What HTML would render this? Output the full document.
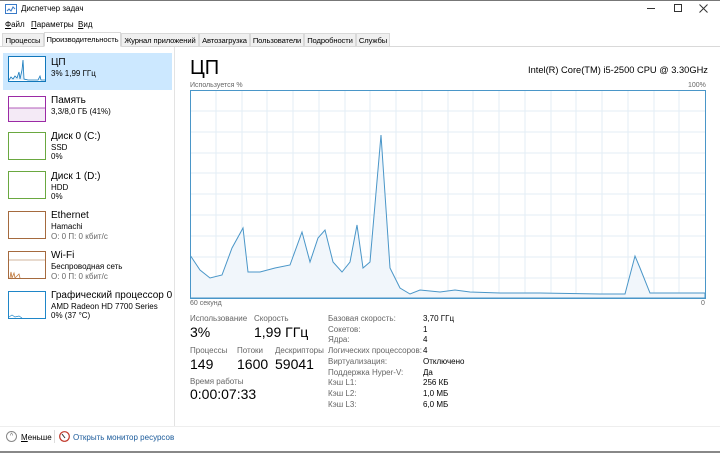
<!DOCTYPE html>
<html><head><meta charset="utf-8"><style>
*{margin:0;padding:0;box-sizing:border-box}
body{width:720px;height:453px;overflow:hidden;background:#fff;font-family:"Liberation Sans","DejaVu Sans",sans-serif;color:#000;position:relative}
.a{position:absolute;white-space:nowrap}
.s{font-size:8px}
.t{font-size:10px}
.g{color:#666}
.tab{position:absolute;top:33px;height:14px;font-size:7.6px;padding:2px 1px;border:1px solid #d9d9d9;background:#f0f0f0;white-space:nowrap;overflow:hidden;text-align:center;letter-spacing:-0.1px}
</style></head><body>
<div class="a" style="left:0;top:0;width:720px;height:1px;background:#777"></div>
<svg class="a" style="left:5px;top:4px" width="12" height="11"><rect x="0.5" y="0.5" width="11" height="9" fill="#fff" stroke="#3a7bc8"/><polyline points="2,7 4,5 6,7 8,3 10,5" fill="none" stroke="#3a7bc8"/></svg>
<div class="a s" style="left:21px;top:4px">Диспетчер задач</div>
<div class="a" style="left:647px;top:8px;width:8px;height:1px;background:#333"></div>
<div class="a" style="left:674px;top:4px;width:8px;height:8px;border:1px solid #333"></div>
<svg class="a" style="left:699px;top:4px" width="9" height="9"><path d="M0.5 0.5L8.5 8.5M8.5 0.5L0.5 8.5" stroke="#333"/></svg>
<div class="a s" style="left:5px;top:20px"><u>Ф</u>айл</div>
<div class="a s" style="left:31px;top:20px"><u>П</u>араметры</div>
<div class="a s" style="left:78px;top:20px"><u>В</u>ид</div>
<div class="a" style="left:0;top:46px;width:720px;height:1px;background:#d9d9d9"></div>
<div class="tab" style="left:2px;width:42px">Процессы</div>
<div class="tab" style="left:44px;top:32px;height:15px;width:77px;background:#fff;border-bottom-color:#fff">Производительность</div>
<div class="tab" style="left:121px;width:78px">Журнал приложений</div>
<div class="tab" style="left:199px;width:51px">Автозагрузка</div>
<div class="tab" style="left:250px;width:54px">Пользователи</div>
<div class="tab" style="left:304px;width:52px">Подробности</div>
<div class="tab" style="left:356px;width:34px">Службы</div>

<div class="a" style="left:174px;top:47px;width:1px;height:380px;background:#e3e3e3"></div>
<div class="a" style="left:3px;top:53px;width:169px;height:37px;background:#cce8ff"></div>

<svg class="a" style="left:0;top:50px" width="60" height="280">
<rect x="8.5" y="6.5" width="37" height="25" fill="#fff" stroke="#1177bb"/>
<polyline points="9,30 11,27 13,29 15,26 17,28 19,22 20,29 22,20 23,10 24,29 28,30 38,30 40,26 41,30 45,30" fill="#e6f1fa" stroke="#1177bb" stroke-width="0.8"/>
<rect x="8.5" y="46.5" width="37" height="25" fill="#fff" stroke="#9b2aa5"/>
<rect x="9" y="58" width="36" height="13" fill="#f4eaf6"/><line x1="9" y1="58" x2="45" y2="58" stroke="#9b2aa5" stroke-width="0.8"/>
<rect x="8.5" y="82.5" width="37" height="27" fill="#fff" stroke="#6aa840"/>
<rect x="8.5" y="121.5" width="37" height="27" fill="#fff" stroke="#6aa840"/>
<rect x="8.5" y="161.5" width="37" height="27" fill="#fff" stroke="#a56a3e"/>
<rect x="8.5" y="201.5" width="37" height="27" fill="#fff" stroke="#a56a3e"/>
<line x1="9" y1="210" x2="45" y2="210" stroke="#a56a3e" stroke-width="0.6"/>
<polyline points="10,228 11,222 12,228 14,223 15,228 19,224 20,228" fill="none" stroke="#c07a3e" stroke-width="0.8"/>
<rect x="8.5" y="241.5" width="37" height="27" fill="#fff" stroke="#1f86c8"/>
<polyline points="9,267 12,265 15,267 19,266 22,268" fill="none" stroke="#1f86c8" stroke-width="0.7"/>
</svg>

<div class="a t" style="left:51px;top:57px">ЦП</div>
<div class="a s" style="left:51px;top:69px">3% 1,99 ГГц</div>
<div class="a t" style="left:51px;top:95px">Память</div>
<div class="a s" style="left:51px;top:107px">3,3/8,0 ГБ (41%)</div>
<div class="a t" style="left:51px;top:131px">Диск 0 (C:)</div>
<div class="a s" style="left:51px;top:143px">SSD</div>
<div class="a s" style="left:51px;top:152px">0%</div>
<div class="a t" style="left:51px;top:171px">Диск 1 (D:)</div>
<div class="a s" style="left:51px;top:183px">HDD</div>
<div class="a s" style="left:51px;top:192px">0%</div>
<div class="a t" style="left:51px;top:210px">Ethernet</div>
<div class="a s" style="left:51px;top:222px">Hamachi</div>
<div class="a s g" style="left:51px;top:232px">О: 0 П: 0 кбит/с</div>
<div class="a t" style="left:51px;top:250px">Wi-Fi</div>
<div class="a s" style="left:51px;top:262px">Беспроводная сеть</div>
<div class="a s g" style="left:51px;top:272px">О: 0 П: 0 кбит/с</div>
<div class="a t" style="left:51px;top:290px">Графический процессор 0</div>
<div class="a s" style="left:51px;top:302px">AMD Radeon HD 7700 Series</div>
<div class="a s" style="left:51px;top:311px">0% (37 °C)</div>

<div class="a" style="left:190px;top:57px;font-size:20px">ЦП</div>
<div class="a" style="left:528px;top:65px;font-size:9.3px">Intel(R) Core(TM) i5-2500 CPU @ 3.30GHz</div>
<div class="a g" style="left:190px;top:82px;font-size:7px">Используется %</div>
<div class="a g" style="left:688px;top:82px;font-size:7px">100%</div>

<svg class="a" style="left:190px;top:90px" width="516" height="209">
<g stroke="#e3eef5" stroke-width="1">
<line x1="26" y1="0" x2="26" y2="208"/><line x1="52" y1="0" x2="52" y2="208"/><line x1="77" y1="0" x2="77" y2="208"/><line x1="103" y1="0" x2="103" y2="208"/><line x1="129" y1="0" x2="129" y2="208"/><line x1="155" y1="0" x2="155" y2="208"/><line x1="180" y1="0" x2="180" y2="208"/><line x1="206" y1="0" x2="206" y2="208"/><line x1="232" y1="0" x2="232" y2="208"/><line x1="258" y1="0" x2="258" y2="208"/><line x1="283" y1="0" x2="283" y2="208"/><line x1="309" y1="0" x2="309" y2="208"/><line x1="335" y1="0" x2="335" y2="208"/><line x1="361" y1="0" x2="361" y2="208"/><line x1="386" y1="0" x2="386" y2="208"/><line x1="412" y1="0" x2="412" y2="208"/><line x1="438" y1="0" x2="438" y2="208"/><line x1="464" y1="0" x2="464" y2="208"/><line x1="489" y1="0" x2="489" y2="208"/>
<line x1="0" y1="21" x2="515" y2="21"/><line x1="0" y1="42" x2="515" y2="42"/><line x1="0" y1="63" x2="515" y2="63"/><line x1="0" y1="83" x2="515" y2="83"/><line x1="0" y1="104" x2="515" y2="104"/><line x1="0" y1="125" x2="515" y2="125"/><line x1="0" y1="146" x2="515" y2="146"/><line x1="0" y1="167" x2="515" y2="167"/><line x1="0" y1="188" x2="515" y2="188"/>
</g>
<polygon points="0,165 10,180 20,188 32,185 42,158 53,138 58,182 70,182 85,178 100,175 112,142 120,172 128,148 135,140 143,172 152,182 160,172 167,135 173,178 180,172 191,45 200,178 210,198 220,204 230,200 250,202 265,200 280,202 310,203 350,203 410,204 435,204 445,166 450,178 460,203 515,203 515,208 0,208" fill="#f1f6fb" stroke="#4a96c8" stroke-width="1"/>
<rect x="0.5" y="0.5" width="515" height="208" fill="none" stroke="#4a96c8"/>
</svg>
<div class="a g" style="left:190px;top:300px;font-size:7px">60 секунд</div>
<div class="a g" style="left:701px;top:300px;font-size:7px">0</div>

<div class="a s g" style="left:190px;top:314px">Использование</div>
<div class="a s g" style="left:254px;top:314px">Скорость</div>
<div class="a" style="left:190px;top:324px;font-size:14px">3%</div>
<div class="a" style="left:254px;top:324px;font-size:14px">1,99 ГГц</div>
<div class="a s g" style="left:190px;top:346px">Процессы</div>
<div class="a s g" style="left:237px;top:346px">Потоки</div>
<div class="a s g" style="left:275px;top:346px">Дескрипторы</div>
<div class="a" style="left:190px;top:356px;font-size:14px">149</div>
<div class="a" style="left:237px;top:356px;font-size:14px">1600</div>
<div class="a" style="left:275px;top:356px;font-size:14px">59041</div>
<div class="a s g" style="left:190px;top:377px">Время работы</div>
<div class="a" style="left:190px;top:386px;font-size:14px">0:00:07:33</div>

<div class="a s g" style="left:328px;top:314px;line-height:10.7px">Базовая скорость:<br>Сокетов:<br>Ядра:<br>Логических процессоров:<br>Виртуализация:<br>Поддержка Hyper-V:<br>Кэш L1:<br>Кэш L2:<br>Кэш L3:</div>
<div class="a s" style="left:423px;top:314px;line-height:10.7px">3,70 ГГц<br>1<br>4<br>4<br>Отключено<br>Да<br>256 КБ<br>1,0 МБ<br>6,0 МБ</div>

<div class="a" style="left:0;top:426px;width:720px;height:1px;background:#eee"></div>
<div class="a" style="left:6px;top:431px;width:11px;height:11px;border:1px solid #888;border-radius:50%;font-size:7px;text-align:center;line-height:9px;color:#666">^</div>
<div class="a s" style="left:21px;top:433px"><u>М</u>еньше</div>
<div class="a" style="left:54px;top:430px;width:1px;height:13px;background:#ddd"></div>
<svg class="a" style="left:59px;top:431px" width="11" height="11"><circle cx="5.5" cy="5.5" r="4.8" fill="#fff" stroke="#c0392b" stroke-width="1.2"/><line x1="3" y1="3" x2="6" y2="7" stroke="#333"/></svg>
<div class="a s" style="left:73px;top:433px;color:#1a5a9a">Открыть монитор ресурсов</div>
<div class="a" style="left:0;top:451px;width:720px;height:2px;background:#888"></div>
</body></html>
